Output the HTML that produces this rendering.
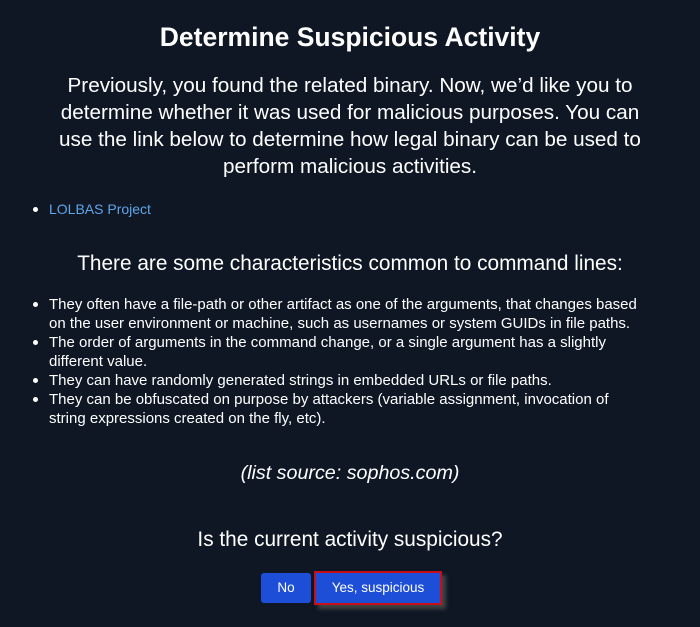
<!DOCTYPE html>
<html><head><style>
body{margin:0;width:700px;height:627px;background:#0f1725;color:#fff;font-family:"Liberation Sans",sans-serif;position:relative;overflow:hidden}
.l{position:absolute;white-space:nowrap}
.c{left:0;width:700px;text-align:center}
.t{font-size:26.5px;font-weight:bold}
.p{font-size:20.7px}
.s{font-size:15px;left:49px}
.d{position:absolute;width:5px;height:5px;border-radius:50%;background:#fff;left:33px}
.btn{position:absolute;background:#1d4ed8;color:#fff;font-size:13.5px;text-align:center;border-radius:3px}
</style></head><body>
<div class="l c t" style="top:22px">Determine Suspicious Activity</div>
<div class="l c p" style="top:74px">Previously, you found the related binary. Now, we’d like you to</div>
<div class="l c p" style="top:101px">determine whether it was used for malicious purposes. You can</div>
<div class="l c p" style="top:128px">use the link below to determine how legal binary can be used to</div>
<div class="l c p" style="top:155px">perform malicious activities.</div>
<div class="d" style="top:207px"></div>
<div class="l" style="left:49px;top:201px;font-size:14px;color:#60a5e8">LOLBAS Project</div>
<div class="l c" style="top:252px;font-size:20.8px">There are some characteristics common to command lines:</div>
<div class="d" style="top:302px"></div>
<div class="l s" style="top:296px">They often have a file-path or other artifact as one of the arguments, that changes based</div>
<div class="l s" style="top:315px">on the user environment or machine, such as usernames or system GUIDs in file paths.</div>
<div class="d" style="top:340px"></div>
<div class="l s" style="top:334px">The order of arguments in the command change, or a single argument has a slightly</div>
<div class="l s" style="top:353px">different value.</div>
<div class="d" style="top:378px"></div>
<div class="l s" style="top:372px">They can have randomly generated strings in embedded URLs or file paths.</div>
<div class="d" style="top:397px"></div>
<div class="l s" style="top:391px">They can be obfuscated on purpose by attackers (variable assignment, invocation of</div>
<div class="l s" style="top:410px">string expressions created on the fly, etc).</div>
<div class="l c" style="top:462px;font-size:19.7px;font-style:italic">(list source: sophos.com)</div>
<div class="l c" style="top:528px;font-size:20.8px">Is the current activity suspicious?</div>
<div class="btn" style="left:261px;top:573px;width:50px;height:30px;line-height:30px">No</div>
<div class="btn" style="left:314px;top:571px;width:124px;height:30px;line-height:30px;border:2px solid #c8101a;border-radius:0;box-shadow:4px 4px 4px #444">Yes, suspicious</div>
</body></html>
